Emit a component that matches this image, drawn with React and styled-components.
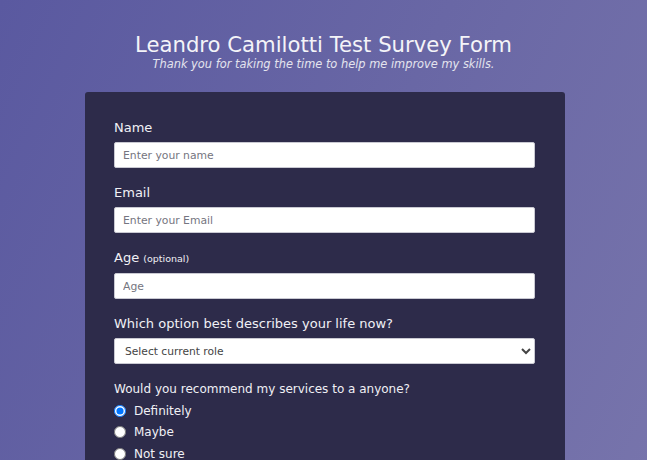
import React from 'react';
import styled, { createGlobalStyle } from 'styled-components';

const GlobalStyle = createGlobalStyle`
  html, body {
    margin: 0;
    padding: 0;
  }
  body {
    font-family: "DejaVu Sans", "Open Sans", sans-serif;
    background: linear-gradient(115deg, #5a59a0 0%, #6967a5 50%, #7875ac 100%);
    min-height: 100vh;
    color: #f0f0f5;
  }
  ::-webkit-scrollbar {
    display: none;
  }
`

const Page = styled.div`
  padding-top: 33px;
  padding-bottom: 40px;
`

const Header = styled.header`
  text-align: center;
`

const Title = styled.h1`
  margin: 0;
  font-size: 21.2px;
  font-weight: 400;
  line-height: 24px;
  color: #f4f4f8;
`

const Description = styled.p`
  margin: 0;
  font-size: 11.4px;
  font-style: italic;
  font-weight: 300;
  line-height: 14px;
  color: #e4e4ee;
`

const Card = styled.form`
  box-sizing: border-box;
  width: 480px;
  margin: 21px 0 0 calc(50% - 238.5px);
  padding: 27px 30px 30px 29px;
  background: #2d2b4a;
  border-radius: 3px;
`

const Group = styled.div`
  margin-bottom: 16px;
`

const Label = styled.label`
  display: block;
  margin-bottom: ${p => (p.$tight ? '2px' : '5px')};
  font-size: ${p => (p.$small ? '12px' : '13px')};
  font-weight: 400;
  line-height: 18px;
  color: #f0f0f5;
`

const Hint = styled.span`
  font-size: 9.5px;
`

const Input = styled.input`
  box-sizing: border-box;
  display: block;
  width: 100%;
  height: 26px;
  padding: 0 8px;
  border: 1px solid #c9c9d2;
  border-radius: 2px;
  background: #fff;
  font-family: inherit;
  font-size: 10.8px;
  color: #333;
  &::placeholder {
    color: #757580;
  }
`

const Select = styled.select`
  box-sizing: border-box;
  display: block;
  width: 100%;
  height: 26px;
  padding: 0 6px;
  border: 1px solid #c9c9d2;
  border-radius: 2px;
  background: #fff;
  font-family: inherit;
  font-size: 10.7px;
  color: #444;
`

const RadioRow = styled.label`
  display: flex;
  align-items: center;
  gap: 8px;
  height: 21.5px;
  font-size: 12px;
  color: #f0f0f5;
  input {
    margin: 0;
    width: 12px;
    height: 12px;
  }
`

const options = ['Definitely', 'Maybe', 'Not sure'];

export default function App() {
  return (
    <Page>
      <GlobalStyle />
      <Header>
        <Title>Leandro Camilotti Test Survey Form</Title>
        <Description>Thank you for taking the time to help me improve my skills.</Description>
      </Header>
      <Card onSubmit={e => e.preventDefault()}>
        <Group>
          <Label htmlFor="name">Name</Label>
          <Input id="name" type="text" placeholder="Enter your name" />
        </Group>
        <Group>
          <Label htmlFor="email">Email</Label>
          <Input id="email" type="email" placeholder="Enter your Email" />
        </Group>
        <Group>
          <Label htmlFor="age">Age <Hint>(optional)</Hint></Label>
          <Input id="age" type="number" placeholder="Age" />
        </Group>
        <Group>
          <Label htmlFor="role">Which option best describes your life now?</Label>
          <Select id="role" defaultValue="">
            <option value="" disabled>Select current role</option>
            <option>Student</option>
            <option>Full time job</option>
            <option>Full time learner</option>
            <option>Prefer not to say</option>
            <option>Other</option>
          </Select>
        </Group>
        <Group>
          <Label $small $tight>Would you recommend my services to a anyone?</Label>
          {options.map((opt, i) => (
            <RadioRow key={opt}>
              <input type="radio" name="recommend" defaultChecked={i === 0} />
              {opt}
            </RadioRow>
          ))}
        </Group>
      </Card>
    </Page>
  );
}
